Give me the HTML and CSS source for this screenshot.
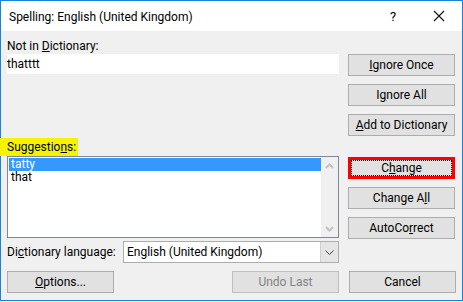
FILE: index.html
```html
<!DOCTYPE html>
<html lang="en">
<head>
<meta charset="UTF-8" />
<meta name="viewport" content="width=device-width, initial-scale=1" />
<title>Spelling: English (United Kingdom)</title>
<link rel="stylesheet" href="styles.css">
</head>
<body>

<div class="window">
  <div class="titlebar">
    <span class="title">Spelling: English (United Kingdom)</span>
    <span class="help">?</span>
    <span class="close">
      <svg width="12" height="12" viewBox="0 0 12 12"><path d="M1 1 L11 11 M11 1 L1 11" stroke="#111" stroke-width="1.1" fill="none"/></svg>
    </span>
  </div>

  <div class="main">
    <div class="left">
      <div class="label">Not in <u>D</u>ictionary:</div>
      <div class="word">thatttt</div>

      <div class="label sugg-label">Suggestio<u>n</u>s:</div>
      <div class="list">
        <div class="items">
          <div class="item selected">tatty</div>
          <div class="item">that</div>
        </div>
        <div class="scrollbar">
          <svg width="9" height="6" viewBox="0 0 9 6"><path d="M1 5 L4.5 1.5 L8 5" stroke="#c2c2c2" stroke-width="2" fill="none"/></svg>
          <svg width="9" height="6" viewBox="0 0 9 6"><path d="M1 1 L4.5 4.5 L8 1" stroke="#c2c2c2" stroke-width="2" fill="none"/></svg>
        </div>
      </div>

      <div class="lang-row">
        <span class="lang-label">Di<u>c</u>tionary language:</span>
        <div class="select">
          <span class="select-value">English (United Kingdom)</span>
          <span class="select-btn">
            <svg width="9" height="5" viewBox="0 0 9 5"><path d="M0.5 0.5 L4.5 4.5 L8.5 0.5" stroke="#444" stroke-width="1" fill="none"/></svg>
          </span>
        </div>
      </div>
    </div>

    <div class="right">
      <button class="btn"><u>I</u>gnore Once</button>
      <button class="btn">I<u>g</u>nore All</button>
      <button class="btn"><u>A</u>dd to Dictionary</button>
      <button class="btn focused first-lower">C<u>h</u>ange</button>
      <button class="btn">Change A<u>l</u>l</button>
      <button class="btn">AutoCo<u>r</u>rect</button>
    </div>
  </div>

  <div class="bottom">
    <button class="btn"><u>O</u>ptions...</button>
    <button class="btn disabled undo">Undo Last</button>
    <button class="btn">Cancel</button>
  </div>
</div>

</body>
</html>
```

FILE: styles.css
```css
html, body {
  margin: 0;
  padding: 0;
  background: #fff;
}
body {
  font-family: Roboto, "Liberation Sans", sans-serif;
  font-size: 12px;
  color: #000;
}
u {
  text-decoration: underline;
  text-underline-offset: 1px;
}
.window {
  width: 463px;
  height: 301px;
  box-sizing: border-box;
  border: 1px solid #1883d7;
  background: #f0f0f0;
}
.titlebar {
  height: 30px;
  background: #fff;
  display: flex;
  align-items: center;
  padding-left: 8px;
}
.title {
  flex: 1;
  margin-top: 1px;
}
.help {
  width: 16px;
  margin-right: 27px;
  font-size: 13px;
}
.close {
  width: 12px;
  margin-right: 17px;
  display: flex;
}
.main {
  display: flex;
  gap: 9px;
  padding-left: 6px;
}
.left {
  width: 332px;
  display: flex;
  flex-direction: column;
}
.label {
  height: 16px;
  line-height: 16px;
  margin-top: 7px;
  white-space: nowrap;
}
.word {
  height: 20px;
  line-height: 20px;
  background: #fff;
}
.sugg-label {
  margin-top: 64px;
  margin-left: -7px;
  padding-left: 7px;
  width: 71px;
  height: 18px;
  line-height: 18px;
  background: #f4f400;
}
.list {
  height: 82px;
  box-sizing: border-box;
  border: 1px solid #828790;
  background: #fff;
  display: flex;
}
.items {
  flex: 1;
  padding: 1px 0 0 1px;
}
.item {
  height: 13px;
  line-height: 13px;
  padding-left: 2px;
}
.item.selected {
  background: #3399ff;
  color: #fff;
}
.scrollbar {
  width: 17px;
  background: #f0f0f0;
  display: flex;
  flex-direction: column;
  justify-content: space-between;
  align-items: center;
  padding: 6px 0 5px;
}
.lang-row {
  display: flex;
  align-items: center;
  margin-top: 3px;
  height: 22px;
}
.lang-label {
  width: 116px;
  white-space: nowrap;
}
.select {
  flex: 1;
  height: 22px;
  box-sizing: border-box;
  border: 1px solid #adadad;
  background: #fff;
  display: flex;
}
.select-value {
  flex: 1;
  padding-left: 3px;
  line-height: 20px;
}
.select-btn {
  width: 17px;
  background: #e5e5e5;
  border-left: 1px solid #cfcfcf;
  display: flex;
  align-items: center;
  justify-content: center;
}
.right {
  width: 107px;
  display: flex;
  flex-direction: column;
  gap: 8px;
  padding-top: 23px;
}
.btn {
  width: 107px;
  height: 22px;
  box-sizing: border-box;
  border: 1px solid #adadad;
  background: #e1e1e1;
  font-family: inherit;
  font-size: 12px;
  color: #000;
  padding: 0;
}
.first-lower {
  margin-top: 13px;
}
.focused {
  border: 3px solid #ff0000;
  outline: 1px dotted #000;
  outline-offset: -4px;
}
.disabled {
  color: #838383;
  border-color: #bfbfbf;
  background: #e1e1e1;
}
.bottom {
  display: flex;
  margin-top: 8px;
  padding-left: 6px;
  gap: 10px;
}
.undo {
  margin-left: auto;
}
.bottom .btn:last-child {
  margin-right: 6px;
}
```
